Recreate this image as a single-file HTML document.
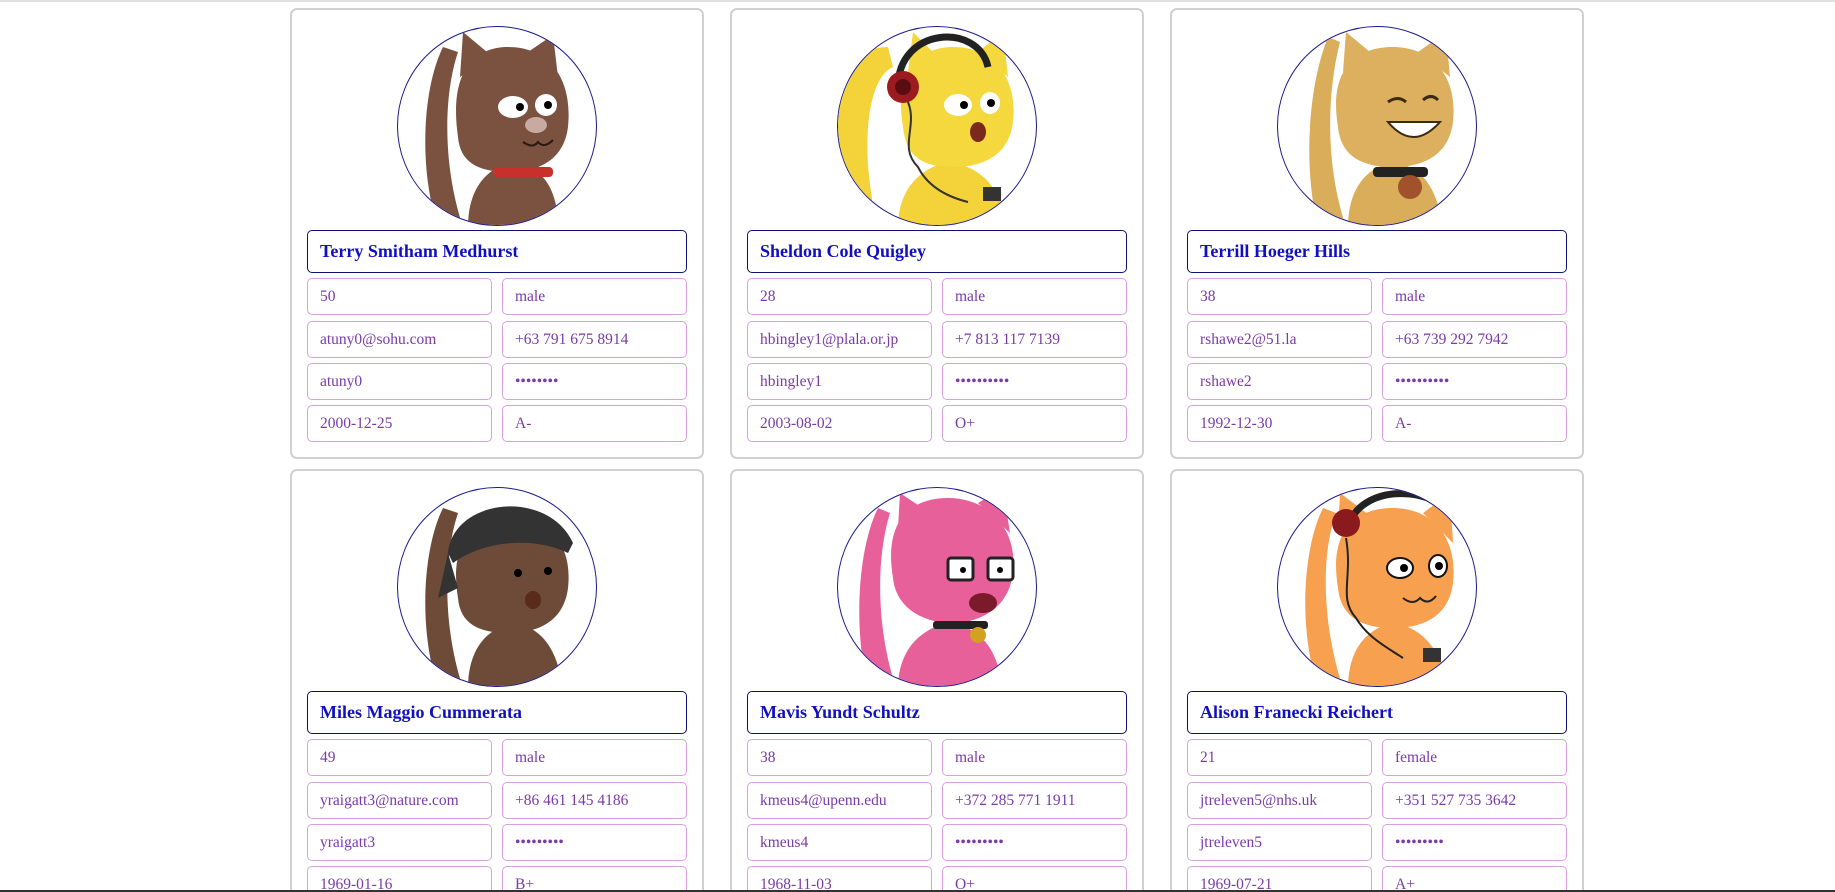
<!DOCTYPE html>
<html style="width:1835px;height:892px;overflow:hidden"><head><meta charset="utf-8"><style>
*{margin:0;padding:0;box-sizing:border-box}
html,body{width:1835px;height:892px;overflow:hidden}
body{background:#fff;font-family:"Liberation Serif",serif}
#wrap{position:relative;width:1835px;height:892px;overflow:hidden}
.top{position:absolute;left:0;top:0;width:1835px;height:2px;background:#e0e0e0}
.bot{position:absolute;left:0;top:890px;width:1835px;height:2px;background:#333}
.card{position:absolute;width:414px;height:451px;border:2px solid #d0d0d0;border-radius:7px;background:#fff}
.av{position:absolute;left:105px;top:16px;width:200px;height:200px;border-radius:50%;border:1px solid #1a1a8c;overflow:hidden;background:#fff}
.av svg{display:block}
.name{position:absolute;left:15px;top:220px;width:380px;height:43px;border:1px solid #10106e;border-radius:5px;color:#1010c0;font-weight:bold;font-size:18px;line-height:41px;padding-left:12px}
.f{position:absolute;width:185px;height:37px;border:1px solid #d8a0e0;border-radius:5px;color:#7a3aa8;font-size:15.5px;line-height:35px;padding-left:12px;white-space:nowrap}
</style></head><body><div id="wrap">
<div class="top"></div>

<div class="card" style="left:290px;top:8px">
<div class="av"><svg width="200" height="200" viewBox="0 0 200 200">
<path d="M40 200 C20 140 25 60 45 20 L60 25 C45 70 45 140 65 200Z" fill="#7b5240"/>
<path d="M70 200 C70 160 90 140 115 135 C150 140 160 170 160 200Z" fill="#7b5240"/>
<path d="M60 110 C50 40 80 20 110 20 C150 20 175 50 170 100 C165 140 130 145 110 145 C80 145 62 135 60 110Z" fill="#7b5240"/>
<path d="M62 50 L65 5 L95 30Z M130 25 L155 8 L160 50Z" fill="#7b5240"/>
<rect x="95" y="140" width="60" height="10" rx="4" fill="#c9302c"/>
<ellipse cx="115" cy="80" rx="15" ry="11" fill="#fff"/><ellipse cx="148" cy="78" rx="11" ry="11" fill="#fff"/>
<circle cx="122" cy="80" r="4" fill="#000"/><circle cx="150" cy="78" r="4" fill="#000"/>
<ellipse cx="138" cy="98" rx="11" ry="8" fill="#c8aaa0"/>
<path d="M125 115 Q135 122 140 115 Q146 122 155 113" stroke="#2a1a10" stroke-width="2" fill="none"/>
</svg></div>
<div class="name">Terry Smitham Medhurst</div>
<div class="f" style="left:15px;top:268px">50</div><div class="f" style="left:210px;top:268px">male</div>
<div class="f" style="left:15px;top:311px">atuny0@sohu.com</div><div class="f" style="left:210px;top:311px">+63 791 675 8914</div>
<div class="f" style="left:15px;top:353px">atuny0</div><div class="f" style="left:210px;top:353px">••••••••</div>
<div class="f" style="left:15px;top:395px">2000-12-25</div><div class="f" style="left:210px;top:395px">A-</div>
</div>

<div class="card" style="left:730px;top:8px">
<div class="av"><svg width="200" height="200" viewBox="0 0 200 200">
<path d="M0 60 C10 30 30 20 50 20 L55 40 C30 50 20 120 40 200 L0 200Z" fill="#f3d23a"/>
<path d="M60 200 C60 160 85 140 110 135 C150 140 165 170 170 200Z" fill="#f3d23a"/>
<path d="M65 100 C55 40 85 20 115 20 C155 20 180 50 175 95 C170 135 135 140 115 140 C85 140 68 130 65 100Z" fill="#f5d73e"/>
<path d="M70 45 L75 5 L100 30Z M140 25 L165 5 L170 50Z" fill="#f5d73e"/>
<path d="M60 60 C60 0 140 -5 150 40" stroke="#222" stroke-width="7" fill="none"/>
<circle cx="65" cy="60" r="16" fill="#9b1b1f"/><circle cx="65" cy="60" r="8" fill="#5a0d10"/>
<path d="M70 75 C80 100 60 120 80 140 C90 160 110 170 130 175" stroke="#333" stroke-width="2" fill="none"/>
<ellipse cx="120" cy="78" rx="14" ry="11" fill="#fff"/><ellipse cx="152" cy="76" rx="10" ry="11" fill="#fff"/>
<circle cx="126" cy="78" r="4" fill="#000"/><circle cx="153" cy="76" r="4" fill="#000"/>
<ellipse cx="140" cy="105" rx="8" ry="10" fill="#7a2a1a"/>
<rect x="145" y="160" width="18" height="14" fill="#333"/>
</svg></div>
<div class="name">Sheldon Cole Quigley</div>
<div class="f" style="left:15px;top:268px">28</div><div class="f" style="left:210px;top:268px">male</div>
<div class="f" style="left:15px;top:311px">hbingley1@plala.or.jp</div><div class="f" style="left:210px;top:311px">+7 813 117 7139</div>
<div class="f" style="left:15px;top:353px">hbingley1</div><div class="f" style="left:210px;top:353px">••••••••••</div>
<div class="f" style="left:15px;top:395px">2003-08-02</div><div class="f" style="left:210px;top:395px">O+</div>
</div>

<div class="card" style="left:1170px;top:8px">
<div class="av"><svg width="200" height="200" viewBox="0 0 200 200">
<path d="M40 200 C25 140 30 60 50 10 L62 15 C48 70 48 140 68 200Z" fill="#d9ad5a"/>
<path d="M70 200 C70 160 90 140 115 135 C150 140 160 170 165 200Z" fill="#d9ad5a"/>
<path d="M60 100 C50 40 80 20 115 20 C155 20 180 50 175 95 C170 135 135 140 115 140 C85 140 63 130 60 100Z" fill="#dcb05e"/>
<path d="M65 45 L68 5 L98 30Z M140 25 L168 5 L172 50Z" fill="#dcb05e"/>
<path d="M110 75 Q120 68 128 75 M145 73 Q153 66 160 73" stroke="#3a2a10" stroke-width="3" fill="none"/>
<path d="M110 95 Q135 125 162 95Z" fill="#fff" stroke="#3a2a10" stroke-width="2"/>
<rect x="95" y="140" width="55" height="10" rx="4" fill="#222"/>
<circle cx="132" cy="160" r="12" fill="#a0522d"/>
</svg></div>
<div class="name">Terrill Hoeger Hills</div>
<div class="f" style="left:15px;top:268px">38</div><div class="f" style="left:210px;top:268px">male</div>
<div class="f" style="left:15px;top:311px">rshawe2@51.la</div><div class="f" style="left:210px;top:311px">+63 739 292 7942</div>
<div class="f" style="left:15px;top:353px">rshawe2</div><div class="f" style="left:210px;top:353px">••••••••••</div>
<div class="f" style="left:15px;top:395px">1992-12-30</div><div class="f" style="left:210px;top:395px">A-</div>
</div>

<div class="card" style="left:290px;top:469px">
<div class="av"><svg width="200" height="200" viewBox="0 0 200 200">
<path d="M40 200 C20 140 25 60 45 20 L60 25 C45 70 45 140 65 200Z" fill="#6e4a38"/>
<path d="M70 200 C70 160 90 140 115 135 C150 140 160 170 165 200Z" fill="#6e4a38"/>
<path d="M60 110 C50 50 80 30 110 30 C150 30 175 55 170 100 C165 140 130 145 110 145 C80 145 62 135 60 110Z" fill="#6e4a38"/>
<path d="M50 65 C55 10 150 0 175 55 L170 65 C140 50 90 50 55 75Z" fill="#333"/>
<path d="M50 65 L40 110 L60 100Z" fill="#333"/>
<circle cx="120" cy="85" r="4" fill="#000"/><circle cx="150" cy="83" r="4" fill="#000"/>
<ellipse cx="135" cy="112" rx="8" ry="9" fill="#5a2a1a"/>
</svg></div>
<div class="name">Miles Maggio Cummerata</div>
<div class="f" style="left:15px;top:268px">49</div><div class="f" style="left:210px;top:268px">male</div>
<div class="f" style="left:15px;top:311px">yraigatt3@nature.com</div><div class="f" style="left:210px;top:311px">+86 461 145 4186</div>
<div class="f" style="left:15px;top:353px">yraigatt3</div><div class="f" style="left:210px;top:353px">•••••••••</div>
<div class="f" style="left:15px;top:395px">1969-01-16</div><div class="f" style="left:210px;top:395px">B+</div>
</div>

<div class="card" style="left:730px;top:469px">
<div class="av"><svg width="200" height="200" viewBox="0 0 200 200">
<path d="M30 200 C15 140 20 60 40 20 L52 25 C38 70 38 140 58 200Z" fill="#e8609a"/>
<path d="M60 200 C60 160 85 140 110 135 C150 140 160 170 165 200Z" fill="#e8609a"/>
<path d="M55 90 C45 30 75 10 110 10 C150 10 180 40 175 85 C170 125 135 135 115 135 C85 135 58 120 55 90Z" fill="#e8609a"/>
<path d="M60 40 L62 5 L92 25Z M140 15 L165 0 L172 45Z" fill="#e8609a"/>
<rect x="110" y="70" width="25" height="22" rx="3" fill="#fff" stroke="#222" stroke-width="3"/>
<rect x="150" y="70" width="25" height="22" rx="3" fill="#fff" stroke="#222" stroke-width="3"/>
<circle cx="125" cy="82" r="3" fill="#000"/><circle cx="162" cy="82" r="3" fill="#000"/>
<ellipse cx="145" cy="115" rx="14" ry="10" fill="#7a1a2a"/>
<rect x="95" y="133" width="55" height="8" rx="3" fill="#222"/>
<circle cx="140" cy="147" r="8" fill="#d4a020"/>
</svg></div>
<div class="name">Mavis Yundt Schultz</div>
<div class="f" style="left:15px;top:268px">38</div><div class="f" style="left:210px;top:268px">male</div>
<div class="f" style="left:15px;top:311px">kmeus4@upenn.edu</div><div class="f" style="left:210px;top:311px">+372 285 771 1911</div>
<div class="f" style="left:15px;top:353px">kmeus4</div><div class="f" style="left:210px;top:353px">•••••••••</div>
<div class="f" style="left:15px;top:395px">1968-11-03</div><div class="f" style="left:210px;top:395px">O+</div>
</div>

<div class="card" style="left:1170px;top:469px">
<div class="av"><svg width="200" height="200" viewBox="0 0 200 200">
<path d="M40 200 C20 140 25 60 45 20 L58 25 C42 70 45 140 65 200Z" fill="#f7a050"/>
<path d="M70 200 C70 160 90 140 115 135 C150 140 165 170 170 200Z" fill="#f7a050"/>
<path d="M60 100 C50 40 80 20 115 20 C155 20 180 50 175 95 C170 135 135 140 115 140 C85 140 63 130 60 100Z" fill="#f7a050"/>
<path d="M60 45 L62 5 L95 30Z M145 25 L172 5 L175 55Z" fill="#f7a050"/>
<path d="M70 40 C80 -5 160 -5 180 35" stroke="#222" stroke-width="7" fill="none"/>
<circle cx="68" cy="35" r="14" fill="#8b1a1f"/>
<path d="M68 50 C75 90 60 110 78 130 C90 150 110 160 125 170" stroke="#222" stroke-width="2" fill="none"/>
<ellipse cx="122" cy="80" rx="13" ry="10" fill="#fff" stroke="#111" stroke-width="2"/><ellipse cx="160" cy="78" rx="9" ry="11" fill="#fff" stroke="#111" stroke-width="2"/>
<circle cx="126" cy="80" r="4" fill="#000"/><circle cx="161" cy="78" r="4" fill="#000"/>
<path d="M125 110 Q135 118 142 110 Q150 118 158 108" stroke="#222" stroke-width="2" fill="none"/>
<rect x="145" y="160" width="18" height="14" fill="#333"/>
</svg></div>
<div class="name">Alison Franecki Reichert</div>
<div class="f" style="left:15px;top:268px">21</div><div class="f" style="left:210px;top:268px">female</div>
<div class="f" style="left:15px;top:311px">jtreleven5@nhs.uk</div><div class="f" style="left:210px;top:311px">+351 527 735 3642</div>
<div class="f" style="left:15px;top:353px">jtreleven5</div><div class="f" style="left:210px;top:353px">•••••••••</div>
<div class="f" style="left:15px;top:395px">1969-07-21</div><div class="f" style="left:210px;top:395px">A+</div>
</div>

<div class="bot"></div>
</div></body></html>
